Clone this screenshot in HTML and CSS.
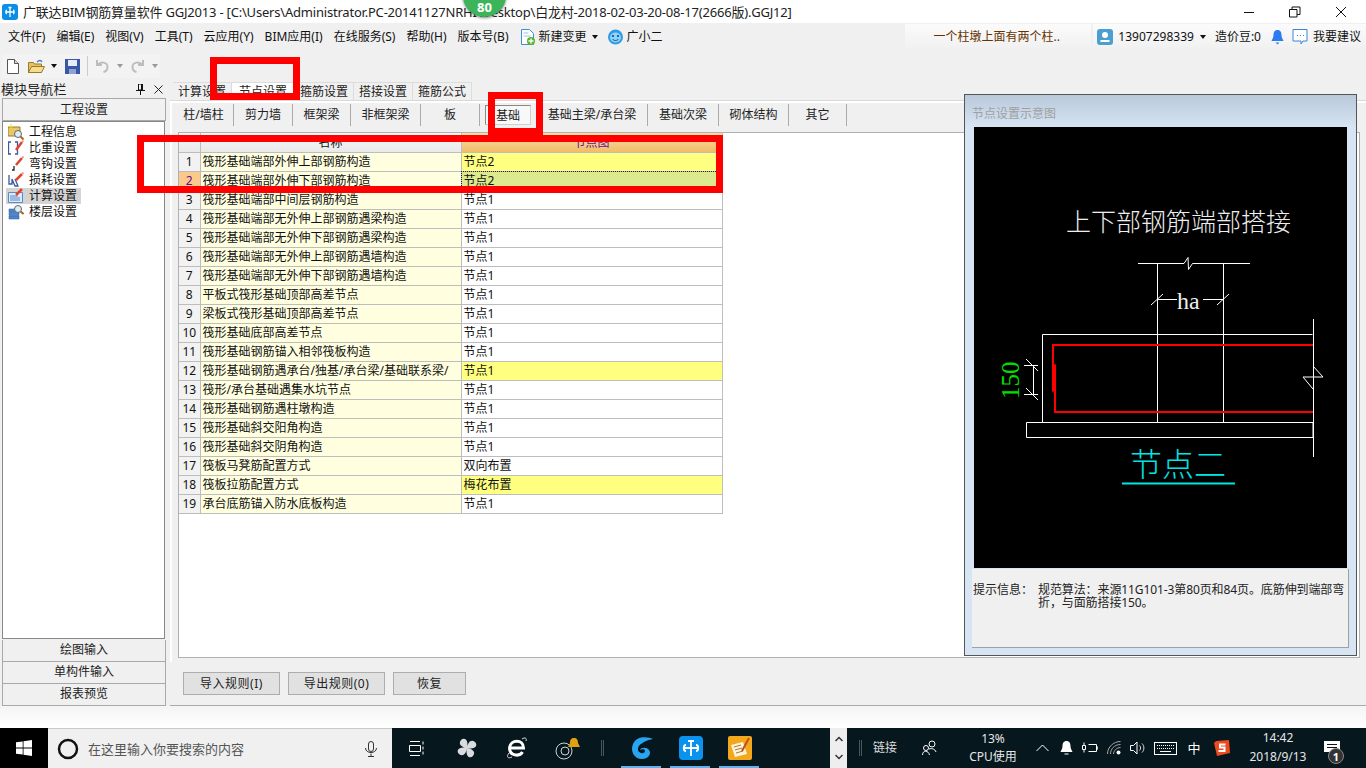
FILE: index.html
```html
<!DOCTYPE html>
<html lang="zh-CN">
<head>
<meta charset="utf-8">
<title>广联达BIM钢筋算量软件 GGJ2013</title>
<link rel="stylesheet" href="styles.css">
</head>
<body>
<div class="app">
  <header class="titlebar">
    <svg class="ti-logo" width="16" height="16" viewBox="0 0 16 16"><rect width="16" height="16" rx="3" fill="#0a8fe8"/><path d="M8 3v10M3.500 8h9M5 6.200c-1.600 0-1.600 3.600 0 3.600M11 6.200c1.600 0 1.600 3.600 0 3.600M6.500 3.500h3" fill="none" stroke="#fff" stroke-width="1.300"/></svg>
    <span class="ti-text">广联达BIM钢筋算量软件 GGJ2013 - [C:\Users\Administrator.PC-20141127NRHI\Desktop\白龙村-2018-02-03-20-08-17(2666版).GGJ12]</span>
    <div class="winbtns">
      <svg width="12" height="12" viewBox="0 0 12 12"><path d="M1 6.500h10" stroke="#111" fill="none"/></svg>
      <svg width="12" height="12" viewBox="0 0 12 12"><path d="M.5 3.500h7.500v7.500h-7.500zM3 3.500v-2.500h8v7.500h-3" stroke="#111" fill="none"/></svg>
      <svg width="12" height="12" viewBox="0 0 12 12"><path d="M1 1l10 10M11 1l-10 10" stroke="#111" fill="none"/></svg>
    </div>
  </header>

  <nav class="menubar">
    <span class="mi">文件(F)</span><span class="mi">编辑(E)</span><span class="mi">视图(V)</span><span class="mi">工具(T)</span><span class="mi">云应用(Y)</span><span class="mi">BIM应用(I)</span><span class="mi">在线服务(S)</span><span class="mi">帮助(H)</span><span class="mi">版本号(B)</span>
    <svg class="m-ic1" width="16" height="18" viewBox="0 0 16 18"><path d="M1.500 1.500h8l4 4v11h-12z" fill="#fff" stroke="#3c8fd8"/><path d="M3.500 5h5M3.500 8h7" stroke="#9cc3e6"/><circle cx="11" cy="13" r="4" fill="#5cb531"/><path d="M11 10.500v5M8.500 13h5" stroke="#fff" stroke-width="1.400"/></svg>
    <span class="mi-b">新建变更</span><span class="caret m-car"></span>
    <svg class="m-ic2" width="17" height="16" viewBox="0 0 17 16"><ellipse cx="8.500" cy="8" rx="7.500" ry="7.500" fill="#2e9be6"/><ellipse cx="8.500" cy="8.500" rx="5.500" ry="5" fill="#8fd3fa"/><circle cx="6" cy="7" r="1.100" fill="#074d8c"/><circle cx="11" cy="7" r="1.100" fill="#074d8c"/><path d="M5.500 10c1.500 2 4.500 2 6 0" fill="none" stroke="#074d8c"/></svg>
    <span class="mi-c">广小二</span>
    <div class="m-news">一个柱墩上面有两个柱..</div>
    <div class="m-user">
      <svg class="u-ic" width="16" height="16" viewBox="0 0 16 16"><rect width="16" height="16" rx="3" fill="#4a9fd0"/><circle cx="8" cy="6" r="3" fill="#fff"/><path d="M3.500 11h9v2h-9z" fill="#fff"/></svg>
      <span class="u-num">13907298339</span><span class="caret u-car"></span>
      <span class="u-bean">造价豆:0</span>
      <svg class="u-bell" width="13" height="16" viewBox="0 0 13 16"><path d="M6.500 1c3 0 4 2.500 4 5 0 3 1.500 4.500 2 6h-12c.5-1.500 2-3 2-6 0-2.500 1-5 4-5z" fill="#2b7cf0"/><path d="M4.500 13.500h4l-2 2z" fill="#2b7cf0"/></svg>
      <svg class="u-chat" width="16" height="16" viewBox="0 0 16 16"><path d="M1 .500h14v11.500h-4l-2 3v-3h-8z" fill="#fff" stroke="#3b86d8"/><path d="M5 6.500h1M8 6.500h1M11 6.500h1" stroke="#3b86d8"/></svg>
      <span class="u-sug">我要建议</span>
    </div>
  </nav>

  <div class="toolbar">
    <div class="tool-group">
      <svg class="t1" width="12" height="15" viewBox="0 0 12 15"><path d="M.5.500h7l4 4v10h-11z" fill="#fff" stroke="#555"/><path d="M7.500.500v4h4" fill="#ddd" stroke="#555"/></svg>
      <svg class="t2" width="17" height="15" viewBox="0 0 17 15"><path d="M.5 3.500h5l1 1.500h7v8.500h-13z" fill="#e8c264" stroke="#9a7a2a"/><path d="M.5 13.500l3-6h13l-3 6z" fill="#f6dc8e" stroke="#9a7a2a"/><path d="M9 3c2-2 4-2 5 0" fill="none" stroke="#3d7bc8" stroke-width="1.300"/></svg>
      <span class="caret t-car1"></span>
      <svg class="t3" width="15" height="15" viewBox="0 0 15 15"><path d="M0 0h15v15h-15z" fill="#3a58a8"/><path d="M3 1h9v6h-9z" fill="#e8eef8"/><path d="M4 10h7v5h-7z" fill="#8fa4d0"/></svg>
      <span class="t-sep"></span>
      <svg class="t4" width="13" height="14" viewBox="0 0 13 14"><path d="M1 1v5h5M1.500 6c3-4 10-3 10 2 0 2.500-2 4.500-4 5" fill="none" stroke="#bdbdbd" stroke-width="2"/></svg>
      <span class="caret g t-car2"></span>
      <svg class="t5" width="13" height="14" viewBox="0 0 13 14"><path d="M12 1v5h-5M11.500 6c-3-4-10-3-10 2 0 2.500 2 4.500 4 5" fill="none" stroke="#bdbdbd" stroke-width="2"/></svg>
      <span class="caret g t-car3"></span>
    </div>
  </div>

  <main class="main">
    <aside class="nav">
      <div class="nav-head">
        <span class="nav-title">模块导航栏</span>
        <svg class="nav-pin" width="9" height="11" viewBox="0 0 9 11"><path d="M2.500 0h4v6h-4zM0 6.500h9M4.500 7v4" stroke="#111" fill="none"/><path d="M5 0h1.500v6h-1.500z" fill="#111"/></svg>
        <svg class="nav-x" width="9" height="9" viewBox="0 0 9 9"><path d="M.5.500l8 8M8.500.500l-8 8" stroke="#222" fill="none"/></svg>
      </div>
      <div class="nav-btn nav-first">工程设置</div>
      <ul class="nav-list">
        <li class="nav-li">
          <svg width="16" height="16" viewBox="0 0 16 16"><path d="M0 3h12v9h-12z" fill="#e8c66a" stroke="#9a7a2a"/><circle cx="10" cy="10" r="3.500" fill="#dcecf8" stroke="#666"/><path d="M12.500 12.500l3 3" stroke="#a86a20" stroke-width="2"/><path d="M3 0v5M.5 2.500h5" stroke="#e9d24a"/></svg>工程信息
        </li>
        <li class="nav-li">
          <svg width="16" height="16" viewBox="0 0 16 16"><path d="M3 2h-2.500v12h2.500M7 2h2.500v12h-2.500" fill="none" stroke="#3a5a9a" stroke-width="1.300"/><path d="M8 10l6-8" stroke="#e0442c" stroke-width="2.500"/><path d="M14 2l1.500-1.500" stroke="#f0a0a0" stroke-width="2"/></svg>比重设置
        </li>
        <li class="nav-li">
          <svg width="16" height="16" viewBox="0 0 16 16"><path d="M8 9l6-7" stroke="#e0442c" stroke-width="2.500"/><path d="M14 2l1.500-1.500" stroke="#f0a0a0" stroke-width="2"/><path d="M6 10v4h-2" fill="none" stroke="#222" stroke-width="1.300"/></svg>弯钩设置
        </li>
        <li class="nav-li">
          <svg width="16" height="16" viewBox="0 0 16 16"><path d="M1 3v9h3v-5l3 7h3l-3-7" fill="none" stroke="#3a5a9a" stroke-width="1.300"/><path d="M8 8l6-6" stroke="#e0442c" stroke-width="2.500"/><path d="M14 2l1.500-1.500" stroke="#f0a0a0" stroke-width="2"/></svg>损耗设置
        </li>
        <li class="nav-li is-sel">
          <svg width="16" height="16" viewBox="0 0 16 16"><path d="M.5 4.500h14v10h-14z" fill="#dceafa" stroke="#5a8ac8"/><path d="M2 8h8M2 10h10M2 12h10" stroke="#5a8ac8"/><path d="M8 7l6-6" stroke="#e0442c" stroke-width="2.500"/></svg>计算设置
        </li>
        <li class="nav-li">
          <svg width="16" height="16" viewBox="0 0 16 16"><path d="M1 5h10v3h-10zM1 8.500h10v3h-10zM1 12h10v3h-10z" fill="#4c86d0" stroke="#2a5a9a" stroke-width=".5"/><circle cx="10" cy="5" r="3.500" fill="#dcecf8" stroke="#666"/><path d="M12.500 7.500l3 2.500" stroke="#a86a20" stroke-width="2"/></svg>楼层设置
        </li>
      </ul>
      <div class="nav-btn">绘图输入</div>
      <div class="nav-btn">单构件输入</div>
      <div class="nav-btn">报表预览</div>
    </aside>

    <section class="content">
      <div class="tabs">
        <span class="tab">计算设置</span><span class="tab is-active">节点设置</span><span class="tab">箍筋设置</span><span class="tab">搭接设置</span><span class="tab">箍筋公式</span>
      </div>
      <div class="panel">
        <div class="subtabs">
          <span class="st w60">柱/墙柱</span><span class="st w59">剪力墙</span><span class="st w58">框架梁</span><span class="st w70">非框架梁</span><span class="st w59">板</span><span class="st w57 st-cur"><span class="st-press">基础</span></span><span class="st w111">基础主梁/承台梁</span><span class="st w71">基础次梁</span><span class="st w70">砌体结构</span><span class="st w58">其它</span>
        </div>
        <div class="frame">
          <table class="grid">
            <colgroup><col class="c0"><col class="c1"><col class="c2"></colgroup>
            <thead><tr><th class="h0"></th><th class="h1">名称</th><th class="h2">节点图</th></tr></thead>
            <tbody>
              <tr><td class="rn">1</td><td class="nm">筏形基础端部外伸上部钢筋构造</td><td class="val y">节点2</td></tr>
              <tr><td class="rn cur">2</td><td class="nm">筏形基础端部外伸下部钢筋构造</td><td class="val sel">节点2</td></tr>
              <tr><td class="rn">3</td><td class="nm">筏形基础端部中间层钢筋构造</td><td class="val">节点1</td></tr>
              <tr><td class="rn">4</td><td class="nm">筏形基础端部无外伸上部钢筋遇梁构造</td><td class="val">节点1</td></tr>
              <tr><td class="rn">5</td><td class="nm">筏形基础端部无外伸下部钢筋遇梁构造</td><td class="val">节点1</td></tr>
              <tr><td class="rn">6</td><td class="nm">筏形基础端部无外伸上部钢筋遇墙构造</td><td class="val">节点1</td></tr>
              <tr><td class="rn">7</td><td class="nm">筏形基础端部无外伸下部钢筋遇墙构造</td><td class="val">节点1</td></tr>
              <tr><td class="rn">8</td><td class="nm">平板式筏形基础顶部高差节点</td><td class="val">节点1</td></tr>
              <tr><td class="rn">9</td><td class="nm">梁板式筏形基础顶部高差节点</td><td class="val">节点1</td></tr>
              <tr><td class="rn">10</td><td class="nm">筏形基础底部高差节点</td><td class="val">节点1</td></tr>
              <tr><td class="rn">11</td><td class="nm">筏形基础钢筋锚入相邻筏板构造</td><td class="val">节点1</td></tr>
              <tr><td class="rn">12</td><td class="nm">筏形基础钢筋遇承台/独基/承台梁/基础联系梁/</td><td class="val y">节点1</td></tr>
              <tr><td class="rn">13</td><td class="nm">筏形/承台基础遇集水坑节点</td><td class="val">节点1</td></tr>
              <tr><td class="rn">14</td><td class="nm">筏形基础钢筋遇柱墩构造</td><td class="val">节点1</td></tr>
              <tr><td class="rn">15</td><td class="nm">筏形基础斜交阳角构造</td><td class="val">节点1</td></tr>
              <tr><td class="rn">16</td><td class="nm">筏形基础斜交阴角构造</td><td class="val">节点1</td></tr>
              <tr><td class="rn">17</td><td class="nm">筏板马凳筋配置方式</td><td class="val">双向布置</td></tr>
              <tr><td class="rn">18</td><td class="nm">筏板拉筋配置方式</td><td class="val y">梅花布置</td></tr>
              <tr><td class="rn">19</td><td class="nm">承台底筋锚入防水底板构造</td><td class="val">节点1</td></tr>
            </tbody>
          </table>
        </div>
      </div>
      <div class="actions">
        <button class="act">导入规则(I)</button><button class="act">导出规则(0)</button><button class="act act-s">恢复</button>
      </div>

      <aside class="dock">
        <div class="dock-title">节点设置示意图</div>
        <svg class="draw" width="373" height="441" viewBox="974 127 373 441">
          <rect x="974" y="127" width="373" height="441" fill="#000"/>
          <text x="1066" y="231" class="d-title">上下部钢筋端部搭接</text>
          <g fill="none" stroke="#fff" stroke-width="1">
            <path d="M1138 263.500h46l4-6 .5 12 4-6h57.500"/>
            <path d="M1157.500 263v159M1223.500 263v159"/>
            <path d="M1157 299.500h20M1203 299.500h20M1151 305l12-11M1217 305l12-11"/>
            <path d="M1042.500 422v-87.500h270"/>
            <path d="M1026.500 422.500h286.500v15h-286.500z"/>
            <path d="M1313.500 319v138"/>
            <path d="M1313 366l10 11h-20l10 12"/>
            <path d="M1024 365.500h14M1024 394.500h14M1033.500 365v29M1026 359l12 12M1026 388l12 12"/>
          </g>
          <g fill="none" stroke="#f00">
            <path d="M1053 391v-46h260" stroke-width="2"/>
            <path d="M1055 365v47h258" stroke-width="2"/>
            <path d="M1053 365h2v26h-2z" stroke-width="1.500"/>
          </g>
          <text x="0" y="0" class="d-num" transform="translate(1019 399) rotate(-90)">150</text>
          <text x="1177" y="309" class="d-ha">ha</text>
          <text x="1130" y="476" class="d-node">节点二</text>
          <path d="M1122 483.500h113" stroke="#00e5e5" stroke-width="2"/>
        </svg>
        <div class="tip">
          <span class="tip-l">提示信息：</span>
          <span class="tip-t">规范算法：来源11G101-3第80页和84页。底筋伸到端部弯折，与面筋搭接150。</span>
        </div>
      </aside>
    </section>
  </main>

  <div class="strip"></div>

  <footer class="taskbar">
    <div class="start"><svg width="16" height="16" viewBox="0 0 16 16"><path d="M0 2.300l6.700-.9v6.200h-6.700zM7.500 1.300l8.500-1.300v7.600h-8.500zM0 8.400h6.700v6.200l-6.700-.9zM7.500 8.400h8.500v7.600l-8.500-1.300z" fill="#fff"/></svg></div>
    <div class="search">
      <svg class="s-ring" width="22" height="22" viewBox="0 0 22 22"><circle cx="11" cy="11" r="9" fill="none" stroke="#111" stroke-width="2.500"/></svg>
      <span class="s-text">在这里输入你要搜索的内容</span>
      <svg class="s-mic" width="12" height="16" viewBox="0 0 12 16"><rect x="3.500" y=".5" width="5" height="10" rx="2.500" fill="none" stroke="#333"/><path d="M.5 7c0 6 11 6 11 0M6 12.500v3M3 15.500h6" fill="none" stroke="#333"/></svg>
    </div>
    <div class="tb-i"><svg width="16" height="15" viewBox="0 0 16 15"><path d="M1 .5h10M1 14.500h10M.5 4.500h11v6h-11z" fill="none" stroke="#fff"/><path d="M14 .5v14" stroke="#fff" stroke-dasharray="3 2"/></svg></div>
    <div class="tb-i"><svg width="22" height="22" viewBox="0 0 22 22"><path d="M11 11c-6-1-9-4-6-8 3-3 8-1 6 8zM11 11c1-6 4-9 8-6 3 3 1 8-8 6zM11 11c6 1 9 4 6 8-3 3-8 1-6-8zM11 11c-1 6-4 9-8 6-3-3-1-8 8-6z" fill="#d8dcde"/></svg></div>
    <div class="tb-i"><svg width="22" height="24" viewBox="0 0 22 24"><path d="M3.500 12h14c0-9-13-9-14 0 0 8 10 9 13 4" fill="none" stroke="#fff" stroke-width="3"/><path d="M16 3c3-2 5-1 4 2M3 17c-3 4-1 6 3 4" fill="none" stroke="#ddd"/></svg></div>
    <div class="tb-i tb-ball"><svg width="28" height="24" viewBox="0 0 28 24"><circle cx="11" cy="15" r="8" fill="none" stroke="#cfd3d5"/><circle cx="12" cy="15" r="4" fill="none" stroke="#cfd3d5"/><path d="M21 2c3 0 4 2 4 5l2 4h-12l2-4c0-3 1-5 4-5z" fill="#e0a010"/></svg></div>
    <span class="tb-sep sep-a"></span>
    <div class="run-i"><svg width="24" height="24" viewBox="0 0 24 24"><path d="M23 3c-6-3-17-3-20 5-3 7 1 15 9 15 6 0 10-5 7-9-2-3-8-3-9 0 2-1 5-1 5 1 0 3-6 3-7-1-1-5 6-9 15-11z" fill="#29a4f0"/></svg></div>
    <div class="run-i"><svg width="24" height="24" viewBox="0 0 24 24"><rect width="24" height="24" rx="4" fill="#0a93ee"/><path d="M12 5v15M9 5h6M5 12h14M7 9c-3 0-3 6 0 6M17 9c3 0 3 6 0 6" fill="none" stroke="#fff" stroke-width="1.800"/></svg></div>
    <div class="run-i"><svg width="24" height="24" viewBox="0 0 24 24"><rect width="24" height="24" rx="2" fill="#f3a81c"/><path d="M3 9l12-3 4 12-12 3z" fill="#fdf3dc"/><path d="M6 11l7-2M7 14l7-2M8 17l7-2" stroke="#a87a30"/><path d="M21 2l-7 13" stroke="#c0501a" stroke-width="2"/></svg></div>
    <div class="scroller"><svg width="8" height="24" viewBox="0 0 8 24"><path d="M.5 5l3.500-3.500 3.500 3.500M.5 19l3.500 3.500 3.500-3.500" fill="none" stroke="#333" stroke-width="1.500"/></svg></div>
    <span class="tb-sep sep-b"></span>
    <span class="link">链接</span>
    <div class="slot64"><svg width="15" height="16" viewBox="0 0 15 16"><circle cx="10" cy="4" r="3" fill="none" stroke="#fff"/><circle cx="4" cy="8" r="2.500" fill="none" stroke="#fff"/><path d="M.5 15c0-5 6-5 7 0M7 9c3-1 6 0 7 3" fill="none" stroke="#fff"/></svg></div>
    <div class="slot64 cpu"><span>13%</span><span>CPU使用</span></div>
    <div class="tr tr-first"><svg width="13" height="8" viewBox="0 0 13 8"><path d="M.5 7l6-6 6 6" fill="none" stroke="#fff"/></svg></div>
    <div class="tr"><svg width="13" height="14" viewBox="0 0 13 14"><path d="M6.500 0c3 0 4 2.500 4 5 0 3 1.500 4.500 2 6h-12c.5-1.500 2-3 2-6 0-2.500 1-5 4-5zM4.500 12.500h4v1h-4z" fill="#fff"/></svg></div>
    <div class="tr"><svg width="16" height="12" viewBox="0 0 16 12"><path d="M6.500 2.500h8v7h-8M.5 3.500h3v4h-3zM2 .5v3M2 7.500v3M14.500 5h1.500v2h-1.500" fill="none" stroke="#fff"/></svg></div>
    <div class="tr"><svg width="14" height="14" viewBox="0 0 14 14"><path d="M.5 13c0-7 6-12.500 13-12.500M3.500 13c0-5 4-9.500 10-9.500M6.500 13c0-3 3-6.500 7-6.500" fill="none" stroke="#aaa"/><circle cx="11.500" cy="11.500" r="2" fill="#fff"/></svg></div>
    <div class="tr"><svg width="16" height="14" viewBox="0 0 16 14"><path d="M.5 4.500h3l3.500-3.500v12l-3.500-3.500h-3z" fill="none" stroke="#fff"/><path d="M9.500 4.500c1.500 1.500 1.500 3.500 0 5M12 2.500c2.500 2.500 2.500 6.500 0 9" fill="none" stroke="#ddd"/></svg></div>
    <div class="tr tr-kb"><svg width="23" height="13" viewBox="0 0 23 13"><rect x=".5" y=".5" width="22" height="12" fill="none" stroke="#fff"/><path d="M3 3.500h17M3 6.500h17" stroke="#fff" stroke-dasharray="1 1"/><path d="M6 9.500h11" stroke="#fff"/></svg></div>
    <div class="tr tr-zh">中</div>
    <div class="tr tr-zh"><svg width="16" height="16" viewBox="0 0 16 16"><path d="M2 1l13-1 1 13-13 3-3-13z" fill="#ed4a1e"/><path d="M11.500 4.500h-5.500v3h4.500v3.500h-6" fill="none" stroke="#fff" stroke-width="2"/></svg></div>
    <div class="clock"><span>14:42</span><span>2018/9/13</span></div>
    <div class="notice">
      <svg width="16" height="14" viewBox="0 0 16 14"><path d="M0 0h16v11h-8l-3 3v-3h-5z" fill="#fff"/><path d="M3 3.500h10M3 6.500h10" stroke="#06171e"/></svg>
      <span class="badge">1</span>
    </div>
  </footer>
</div>

<div class="score">80</div>
<div class="mark m-a"></div>
<div class="mark m-b"></div>
<div class="mark m-c"></div>
</body>
</html>
```
FILE: styles.css
```css
* { box-sizing: border-box; }
html, body { margin: 0; height: 100%; }
body {
  position: relative;
  width: 1366px;
  height: 768px;
  overflow: hidden;
  background: #f0f0f0;
  color: #111;
  font: 12px/16px "Noto Sans", "Noto Sans CJK SC", sans-serif;
}
svg { display: block; flex: none; }
ul { list-style: none; margin: 0; padding: 0; }
.app { display: flex; flex-direction: column; height: 768px; }

.titlebar { height: 23px; background: #fff; display: flex; align-items: center; padding-left: 2px; flex: none; }
.ti-logo { margin-right: 5px; }
.ti-text { font-size: 13px; letter-spacing: -.2px; white-space: nowrap; color: #222; }
.winbtns { margin-left: auto; display: flex; gap: 34px; padding-right: 19px; }

.menubar { height: 28px; display: flex; align-items: center; padding-left: 8px; flex: none; white-space: nowrap; }
.mi { margin-right: 11px; }
.mi-b { margin-left: 3px; }
.caret { width: 0; height: 0; border: 3.5px solid transparent; border-top: 4px solid #111; border-bottom: 0; flex: none; }
.caret.g { border-top-color: #999; }
.m-car { margin-left: 5px; }
.m-ic2 { margin-left: 9px; }
.mi-c { margin-left: 3px; }
.m-news { width: 187px; height: 26px; margin-left: 242px; padding-left: 29px; line-height: 26px; color: #663300; background: linear-gradient(#fbfbfb, #f0f0f0); }
.m-user { width: 273px; height: 26px; margin-left: 2px; display: flex; align-items: center; padding-left: 4px; background: linear-gradient(#fbfbfb, #f0f0f0); }
.u-num { margin-left: 5px; }
.u-car { margin-left: 6px; }
.u-bean { margin-left: 9px; }
.u-bell { margin-left: 10px; }
.u-chat { margin-left: 8px; }
.u-sug { margin-left: 5px; }

.toolbar { height: 29px; flex: none; padding: 3px 0 2px 2px; }
.tool-group { width: 158px; height: 24px; background: #f3f3f3; display: flex; align-items: center; padding-left: 5px; }
.t2 { margin-left: 9px; }
.t-car1 { margin-left: 6px; }
.t3 { margin-left: 8px; }
.t-sep { width: 1px; height: 20px; background: #ccc; margin: 0 8px 0 7px; }
.t-car2 { margin-left: 8px; }
.t5 { margin-left: 8px; }
.t-car3 { margin-left: 8px; }

.main { height: 626px; display: flex; flex: none; }
.nav { width: 170px; flex: none; padding-left: 2px; display: flex; flex-direction: column; }
.nav-head { height: 18px; display: flex; align-items: center; margin-left: -1px; font-size: 13px; color: #222; }
.nav-title { letter-spacing: .1px; }
.nav-pin { margin-left: 69px; }
.nav-x { margin-left: 9px; }
.nav-btn { width: 164px; height: 22px; line-height: 20px; text-align: center; background: #f0f0f0; border: 1px solid #a9a9a9; border-top-width: 0; color: #222; flex: none; }
.nav-first { height: 23px; line-height: 21px; border-top-width: 1px; background: #f1f1f1; }
.nav-list { height: 518px; width: 163px; background: #fff; border: 1px solid #888; padding: 2px 0 0 3px; flex: none; margin-bottom: 1px; }
.nav-li { height: 16px; width: 75px; display: flex; align-items: center; gap: 5px; line-height: 16px; padding-left: 2px; white-space: nowrap; }
.nav-li.is-sel { background: #d4d4d4; }

.content { position: relative; flex: 1; min-width: 0; }
.tabs { height: 20px; padding: 2px 0 0 3px; display: flex; }
.tab { width: 59px; height: 18px; line-height: 18px; text-align: center; background: #f0f0f0; border: 1px solid #dcdcdc; border-bottom: 0; border-left-width: 0; color: #222; }
.tab.is-active { background: #fff; width: 63px; }
.panel { height: 562px; border-top: 1px solid #d9d9d9; padding: 2px 0 5px 8px; box-shadow: inset 0 2px 0 #fff, inset 2px 0 0 #fff; }
.subtabs { height: 23px; margin-left: -4px; margin-top: 1px; display: flex; }
.st { height: 22px; line-height: 22px; text-align: center; border-right: 1px solid #aaa; color: #222; flex: none; white-space: nowrap; }
.w57 { width: 57px; } .w58 { width: 58px; } .w59 { width: 59px; } .w60 { width: 60px; }
.w70 { width: 70px; } .w71 { width: 71px; } .w111 { width: 111px; }
.st-cur { padding: 1px 5px 1px 5px; }
.st-press { display: block; height: 20px; line-height: 20px; background: #f8f8f8; border: 1px solid #cfcfcf; border-left-color: #888; border-top-color: #888; }
.frame { margin-top: 5px; height: 526px; margin-right: 6px; background: #fff; border: 1px solid #b0b0b0; }
.grid { border-collapse: collapse; table-layout: fixed; width: 543px; }
.c0 { width: 21px; } .c1 { width: 261px; } .c2 { width: 261px; }
.grid th, .grid td { height: 19px; padding: 0 0 0 2px; border: 1px solid #bdbdbd; font-weight: 400; line-height: 17px; overflow: hidden; white-space: nowrap; text-align: left; }
.grid tr > :first-child { border-left: 0; }
.grid thead th { border-top: 0; text-align: center; padding: 0; background: linear-gradient(#f8f8f8, #e9e9e9); }
.grid thead .h2 { background: linear-gradient(#fae0aa, #f0bc68); color: #6a0a9a; }
.grid .rn { text-align: center; padding: 0; background: #f2f2f2; }
.grid .rn.cur { background: #fbc98c; color: #6a0a9a; }
.grid .nm { background: #ffffe0; }
.grid .y { background: #ffff80; }
.grid .sel { background: #dce98c; outline: 1px dotted #223; outline-offset: -1px; }

.actions { height: 41px; margin-top: 3px; padding: 7px 0 0 13px; display: flex; gap: 8px; align-items: flex-start; border-bottom: 1px solid #a9a9a9; background: #f0f0f0; }
.act { width: 97px; height: 23px; padding: 0; background: #e1e1e1; border: 1px solid #adadad; font: inherit; line-height: 20px; color: #222; letter-spacing: .5px; }
.act-s { width: 73px; }

.dock { position: absolute; left: 794px; top: 14px; width: 393px; height: 562px; border: 1px solid #555; background: linear-gradient(#b9c9da, #d6e4f3 32px); padding: 1px 7px 0 7px; }
.dock-title { height: 31px; line-height: 36px; color: #a0a0a0; }
.draw { margin-left: 2px; }
.tip { width: 377px; height: 79px; margin-top: 1px; background: #f0f0f0; border-right: 1px solid #a0a0a0; border-bottom: 1px solid #a0a0a0; display: flex; padding: 14px 0 0 1px; line-height: 13px; color: #222; }
.tip-l { width: 65px; flex: none; }
.tip-t { letter-spacing: -.1px; }
.d-title { font-size: 25px; fill: #eee; font-family: "Noto Sans CJK SC", sans-serif; font-weight: 300; }
.d-num { font-size: 25px; fill: #00e000; font-family: "Liberation Serif", serif; }
.d-ha { font-size: 24px; fill: #eee; font-family: "Liberation Serif", serif; }
.d-node { font-size: 32px; fill: #00e5e5; font-family: "Noto Sans CJK SC", sans-serif; font-weight: 300; }

.strip { height: 22px; flex: none; background: linear-gradient(#f4f4f4, #fff); }
.taskbar { height: 40px; flex: none; background: #06171e; display: flex; align-items: center; color: #e6e6e6; white-space: nowrap; }
.start { width: 48px; height: 40px; background: #000; display: flex; align-items: center; justify-content: center; }
.search { width: 344px; height: 40px; background: #f0f0f0; display: flex; align-items: center; padding-left: 9px; border-top: 1px solid #c8c8c8; }
.s-text { margin-left: 9px; font-size: 13px; color: #555; }
.s-mic { margin-left: auto; margin-right: 15px; }
.tb-i { width: 50px; height: 40px; display: flex; align-items: center; justify-content: center; }
.tb-sep { width: 3px; height: 16px; border-left: 1px solid #4a585e; border-right: 1px solid #4a585e; flex: none; }
.sep-a { margin-left: 9px; margin-right: 13px; }
.run-i { width: 49px; height: 40px; display: flex; align-items: center; justify-content: center; position: relative; }
.run-i::after { content: ""; position: absolute; left: 4px; right: 5px; bottom: 0; height: 2px; background: #63b0f0; }
.scroller { width: 17px; height: 40px; margin-left: 66px; background: #eee; display: flex; align-items: center; justify-content: center; }
.sep-b { margin-left: 12px; }
.link { margin-left: 11px; width: 24px; color: #ddd; }
.slot64 { width: 64px; height: 40px; display: flex; flex-direction: column; align-items: center; justify-content: center; }
.cpu { line-height: 18px; }
.tr { width: 24px; height: 40px; display: flex; align-items: center; justify-content: center; flex: none; }
.tr-first { margin-left: 5px; }
.tr-kb { width: 30px; }
.tr-zh { width: 28px; font-size: 13px; color: #fff; }
.clock { width: 84px; display: flex; flex-direction: column; align-items: center; line-height: 19px; padding-bottom: 2px; }
.notice { width: 24px; height: 40px; position: relative; display: flex; align-items: center; justify-content: center; }
.badge { position: absolute; left: 8px; top: 20px; width: 16px; height: 16px; line-height: 15px; border-radius: 50%; border: 1px solid #888; background: #333; color: #fff; text-align: center; font-size: 11px; font-weight: 700; }

.score { position: absolute; left: 463px; top: -26px; width: 43px; height: 43px; border-radius: 50%; background: #3cb55a; color: #fff; font-weight: 700; font-size: 13px; text-align: center; line-height: 16px; padding-top: 25px; box-shadow: 0 1px 3px rgba(0,0,0,.5); }
.mark { position: absolute; border: 7px solid #f00; }
.m-a { left: 210px; top: 57px; width: 90px; height: 43px; }
.m-b { left: 488px; top: 92px; width: 55px; height: 43px; }
.m-c { left: 137px; top: 135px; width: 586px; height: 58px; }
```
